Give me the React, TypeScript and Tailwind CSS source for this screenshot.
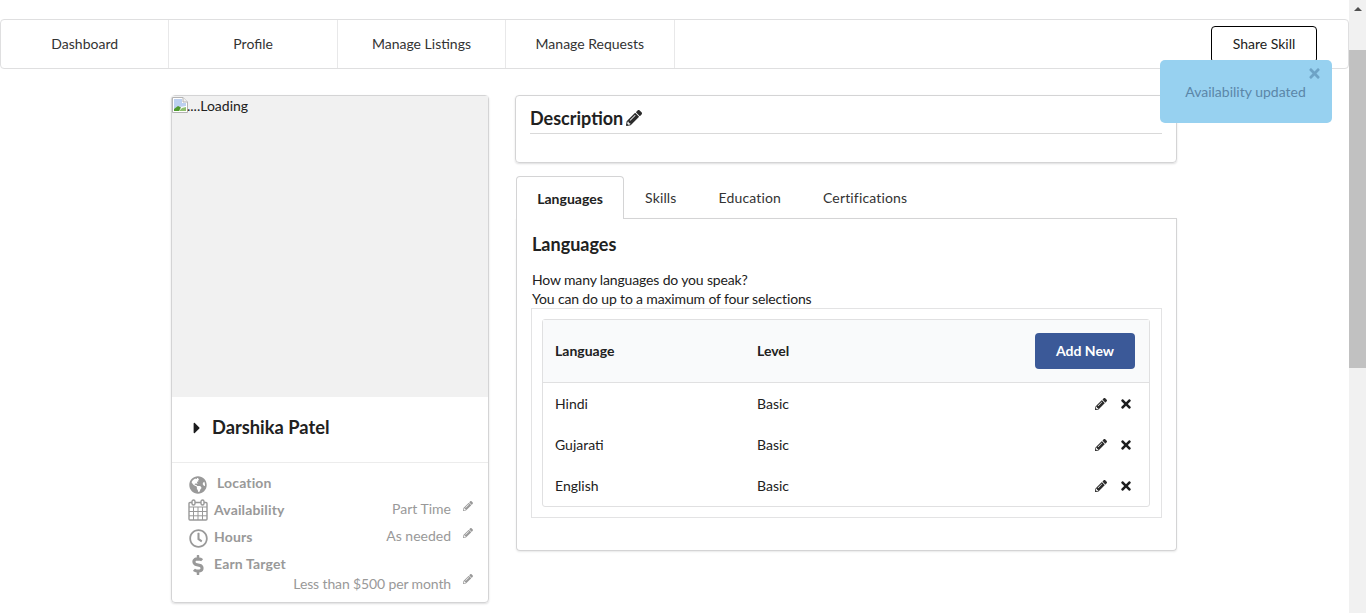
import React from "react";
import { FaCaretRight, FaDollarSign, FaGlobeAmericas, FaPencilAlt, FaRegClock, FaTimes } from "react-icons/fa";

const menuItems = ["Dashboard", "Profile", "Manage Listings", "Manage Requests"];
const languages = ["Hindi", "Gujarati", "English"];

const BrokenImage = () => (
    <svg width="16" height="16" viewBox="0 0 16 16" className="shrink-0 mt-[1px]">
        <path d="M0.500 0.500h10.500l4.500 4.500v10.500h-15z" fill="#fff" stroke="#b4b4b4" />
        <path d="M11 0.500v4.500h4.500" fill="#f2f2f2" stroke="#b4b4b4" />
        <path d="M2 2h8v4h4v3L8 10 2 12z" fill="#bcd0f0" />
        <path d="M2 14v-2l4-3 3 1.500L7 14z" fill="#4e9a2e" />
        <path d="M7 14l3-3 4-1v4z" fill="#8fc06f" />
    </svg>
);

const CalendarIcon = () => (
    <svg width="20" height="22" viewBox="0 0 20 22" fill="none" stroke="#999" strokeWidth="1.4">
        <rect x="1" y="3.500" width="18" height="17.500" rx="1" />
        <path d="M1 8h18M1 12.500h18M1 16.800h18M5.500 8v13M10 8v13M14.500 8v13" strokeWidth="1" />
        <rect x="4" y="1" width="3" height="5" rx="1.500" fill="#fff" />
        <rect x="13" y="1" width="3" height="5" rx="1.500" fill="#fff" />
    </svg>
);

const StatRow = ({ icon, label, value, labelClass }: { icon: React.ReactNode; label: string; value?: string; labelClass?: string }) => (
    <div className="flex items-center h-[27px]">
        <span className="w-[20px] flex justify-center shrink-0">{icon}</span>
        <span className={`font-bold text-[#999] tracking-[0.15px] ${labelClass ?? "ml-[6px]"}`}>{label}</span>
        {value && <span className="ml-auto text-[#999] -mt-[2px]">{value}</span>}
        {value && <FaPencilAlt className="text-[10px] text-[#999] ml-[12px] mr-[2px] -mt-[8px]" />}
    </div>
);

const App = () => {
    return (
        <div className="flex h-[613px] overflow-hidden bg-white text-[14px] text-[#212121] font-['Lato',sans-serif] relative">
            <div className="flex-1 min-w-0">
                <div className="mt-[19px] h-[50px] flex items-center border border-[#dfdfe0] rounded-[4px]">
                    {menuItems.map((item) => (
                        <div key={item} className="w-[168.4px] h-full flex items-center justify-center border-r border-[#e8e8e9] text-[#333] pb-[2px]">
                            {item}
                        </div>
                    ))}
                    <button className="ml-auto mr-[31px] w-[106px] h-[37px] border border-black rounded-[4px] text-[#212121] bg-white pb-[2px]">Share Skill</button>
                </div>

                <div className="flex items-start mt-[26px] ml-[171px] gap-[26px]">
                    <div className="w-[318px] h-[508px] border border-[#d4d4d5] rounded-[4px] shadow-[0_1px_2px_rgba(34,36,38,0.15)] flex flex-col">
                        <div className="h-[301px] bg-[#f1f1f1] flex items-start leading-[20px] text-[#212121]">
                            <BrokenImage />
                            <span className="-ml-px">....Loading</span>
                        </div>
                        <div className="h-[66px] flex items-center pl-[20px] pb-[4px] border-b border-[#ececec] text-[#212121]">
                            <FaCaretRight className="text-[18px] w-[10px] text-[#1b1c1d]" />
                            <span className="ml-[10px] text-[18.3px] font-bold leading-none">Darshika Patel</span>
                        </div>
                        <div className="pl-[16px] pr-[13px] pt-[7px]">
                            <StatRow icon={<FaGlobeAmericas className="text-[18px] text-[#999] mt-[3px]" />} label="Location" labelClass="ml-[9px] -mt-[3px]" />
                            <div className="-mt-px">
                                <StatRow icon={<CalendarIcon />} label="Availability" value="Part Time" />
                            </div>
                            <StatRow icon={<FaRegClock className="text-[19px] text-[#999] mt-[3px]" />} label="Hours" value="As needed" />
                            <StatRow icon={<FaDollarSign className="text-[20px] text-[#999] mt-[2px]" />} label="Earn Target" />
                            <div className="flex items-center justify-end -mt-[4px] h-[20px]">
                                <span className="text-[#999] tracking-[-0.125px]">Less than $500 per month</span>
                                <FaPencilAlt className="text-[10px] text-[#999] ml-[12px] mr-[2px] -mt-[9px]" />
                            </div>
                        </div>
                    </div>

                    <div className="w-[662px]">
                        <div className="h-[68px] border border-[#d4d4d5] rounded-[4px] shadow-[0_1px_2px_rgba(34,36,38,0.15)] pt-[10px] px-[14px]">
                            <div className="h-[28px] flex items-center border-b border-[#d9d9d9] pb-[3px] text-[18px] font-bold text-[#212121]">
                                <span>Description</span>
                                <FaPencilAlt className="text-[16px] ml-[3px] text-[#2b2b2b]" />
                            </div>
                        </div>

                        <div className="flex mt-[13px] h-[43px] pl-[1px]">
                            <div className="w-[108px] shrink-0 h-[43px] flex items-center justify-center border border-[#d4d4d5] border-b-0 rounded-t-[4px] font-bold bg-white relative z-10">Languages</div>
                            <div className="flex items-center h-[43px] pl-[21px] gap-[42px] w-full border-b border-[#d4d4d5] text-[#333] tracking-[0.15px]">
                                <span>Skills</span>
                                <span>Education</span>
                                <span>Certifications</span>
                            </div>
                        </div>

                        <div className="ml-[1px] h-[333px] -mt-px border border-[#d4d4d5] border-t-0 rounded-b-[4px] shadow-[0_1px_2px_rgba(34,36,38,0.1)] px-[14px] pt-[14px]">
                            <h3 className="pl-px text-[18px] font-bold leading-[24px] text-[#212121]">Languages</h3>
                            <p className="pl-px mt-[14px] leading-[19px] text-[#212121] tracking-[-0.15px]">How many languages do you speak?</p>
                            <p className="pl-px leading-[19px] text-[#212121] tracking-[-0.15px]">You can do up to a maximum of four selections</p>
                            <div className="w-[631px] h-[210px] border border-[#e3e3e4] pt-[10px] pb-[10px] pl-[10px] pr-[11px]">
                                <div className="h-[188px] border border-[#e0e0e1] rounded-[3px]">
                                    <div className="h-[63px] flex items-center bg-[#f9fafb] border-b border-[#e0e0e1] pl-[12px] pr-[14px] font-bold">
                                        <span className="w-[202px] -mt-[2px]">Language</span>
                                        <span className="-mt-[2px]">Level</span>
                                        <button className="ml-auto w-[100px] h-[36px] rounded-[4px] bg-[#3b5998] text-white font-bold pb-[2px]">Add New</button>
                                    </div>
                                    {languages.map((lang) => (
                                        <div key={lang} className="h-[41px] flex items-center pl-[12px] pr-[16px]">
                                            <span className="w-[202px]">{lang}</span>
                                            <span>Basic</span>
                                            <FaPencilAlt className="ml-auto text-[12px] text-[#2b2b2b]" />
                                            <FaTimes className="ml-[12px] text-[14px] text-[#1b1c1d]" />
                                        </div>
                                    ))}
                                </div>
                            </div>
                        </div>
                    </div>
                </div>
            </div>

            <div className="w-[17px] shrink-0 bg-[#f1f1f1] flex flex-col items-center">
                <div className="h-[17px] flex items-center justify-center">
                    <div className="w-0 h-0 border-x-[4px] border-x-transparent border-b-[4px] border-b-[#505050]" />
                </div>
                <div className="mt-[33px] w-full h-[318px] bg-[#c1c1c1]" />
            </div>

            <div className="absolute left-[1160px] top-[60px] w-[172px] h-[63px] rounded-[5px] bg-[#97d1f0] text-[#5b86a8] flex items-center justify-center pr-[1px]">
                <FaTimes className="absolute right-[10px] top-[6px] text-[15px] text-[#6ea3c6]" />
                <span>Availability updated</span>
            </div>
        </div>
    );
};

export default App;
